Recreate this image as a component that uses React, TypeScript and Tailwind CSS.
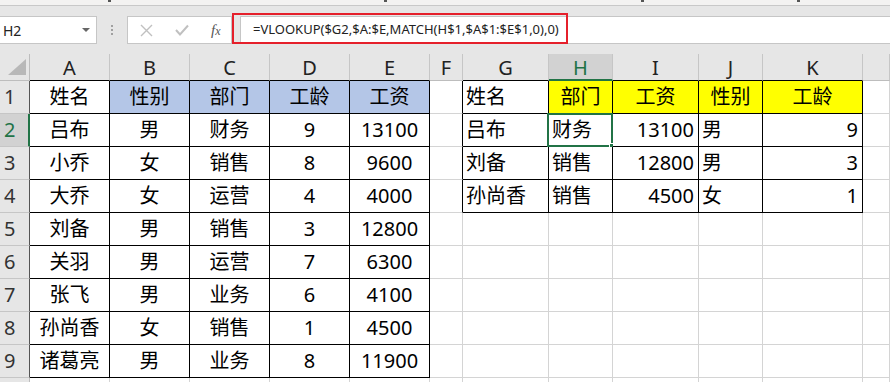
import React from 'react'

type Align = 'c' | 'l' | 'r'
type Cell = { t: string; a?: Align; bg?: string }

const LETTERS = ['A', 'B', 'C', 'D', 'E', 'F', 'G', 'H', 'I', 'J', 'K', '']

const LEFT: string[][] = [
  ['姓名', '性别', '部门', '工龄', '工资'],
  ['吕布', '男', '财务', '9', '13100'],
  ['小乔', '女', '销售', '8', '9600'],
  ['大乔', '女', '运营', '4', '4000'],
  ['刘备', '男', '销售', '3', '12800'],
  ['关羽', '男', '运营', '7', '6300'],
  ['张飞', '男', '业务', '6', '4100'],
  ['孙尚香', '女', '销售', '1', '4500'],
  ['诸葛亮', '男', '业务', '8', '11900'],
]

const RIGHT: Cell[][] = [
  [{ t: '姓名', a: 'l' }, { t: '部门', bg: 'y' }, { t: '工资', bg: 'y' }, { t: '性别', bg: 'y' }, { t: '工龄', bg: 'y' }],
  [{ t: '吕布', a: 'l' }, { t: '财务', a: 'l' }, { t: '13100', a: 'r' }, { t: '男', a: 'l' }, { t: '9', a: 'r' }],
  [{ t: '刘备', a: 'l' }, { t: '销售', a: 'l' }, { t: '12800', a: 'r' }, { t: '男', a: 'l' }, { t: '3', a: 'r' }],
  [{ t: '孙尚香', a: 'l' }, { t: '销售', a: 'l' }, { t: '4500', a: 'r' }, { t: '女', a: 'l' }, { t: '1', a: 'r' }],
]

// row r (1-based), column c (0 = A)
const cellAt = (r: number, c: number): Cell | null => {
  if (c <= 4 && r <= 9) {
    const t = LEFT[r - 1][c]
    return { t, a: 'c', bg: r === 1 && c > 0 ? 'b' : undefined }
  }
  if (c >= 6 && c <= 10 && r <= 4) {
    const cell = RIGHT[r - 1][c - 6]
    return { a: 'c', ...cell }
  }
  return null
}

const Grid = () => {
  const rows = [1, 2, 3, 4, 5, 6, 7, 8, 9, 10]
  return (
    <div className="grid grid-cols-[30px_80px_80px_80px_80px_80px_33px_86px_64px_86px_64px_100px_1fr]">
      {/* corner */}
      <div className="relative h-[27px] bg-[#e6e6e6] border-r border-b border-[#bdbdbd]">
        <svg className="absolute left-[7px] top-[5px]" width="20" height="17" viewBox="0 0 20 17">
          <polygon points="19,0 19,16 1,16" fill="#b8b8b8" />
        </svg>
      </div>
      {LETTERS.map((l, c) => {
        const inTable = c <= 4 || (c >= 6 && c <= 10)
        const sel = c === 7
        return (
          <div
            key={l + c}
            className={
              'h-[27px] flex items-center justify-center pt-[2px] text-[20px] border-r border-[#c6c6c6] ' +
              (sel
                ? 'bg-[#d2d2d2] text-[#217346] border-b-2 border-b-[#217346]'
                : 'bg-[#e6e6e6] text-[#222] border-b ' + (inTable ? 'border-b-black' : 'border-b-[#bdbdbd]'))
            }
          >
            {l}
          </div>
        )
      })}
      {rows.map((r) => (
        <React.Fragment key={r}>
          <div
            className={
              'h-[33px] flex items-center pl-[4px] text-[20px] border-b border-b-[#c6c6c6] ' +
              (r === 2
                ? 'bg-[#d2d2d2] text-[#217346] border-r-2 border-r-[#217346]'
                : 'bg-[#e6e6e6] text-[#333] border-r ' + (r <= 9 ? 'border-r-[#555]' : 'border-r-[#bdbdbd]'))
            }
          >
            {r <= 9 ? r : ''}
          </div>
          {LETTERS.map((_, c) => {
            const cell = cellAt(r, c)
            const boxed = cell !== null
            const rightBlack = boxed || (c === 5 && r <= 4)
            const align =
              cell?.a === 'l' ? 'justify-start pl-[3px]' : cell?.a === 'r' ? 'justify-end pr-[4px]' : 'justify-center'
            const bg = cell?.bg === 'b' ? 'bg-[#b4c6e7]' : cell?.bg === 'y' ? 'bg-[#ffff00]' : 'bg-white'
            return (
              <div
                key={c}
                className={
                  'relative h-[33px] flex items-center text-[20px] text-black border-r border-b ' +
                  align +
                  ' ' +
                  bg +
                  ' ' +
                  (rightBlack ? 'border-r-black' : 'border-r-[#d4d4d4]') +
                  ' ' +
                  (boxed ? 'border-b-black' : 'border-b-[#d4d4d4]')
                }
              >
                {cell?.t}
                {r === 2 && c === 7 && (
                  <>
                    <div className="absolute -left-[2px] -top-[1px] w-[66px] h-[34px] border-2 border-[#217346]" />
                    <div className="absolute -right-[3px] -bottom-[3px] w-[6px] h-[6px] bg-[#217346] border border-white" />
                  </>
                )}
              </div>
            )
          })}
        </React.Fragment>
      ))}
    </div>
  )
}

const FormulaBar = () => (
  <div className="relative h-[48px] bg-[#e6e6e6] pt-[10px]">
    <div className="flex items-start">
      {/* name box */}
      <div className="relative w-[97px] h-[28px] bg-white border border-l-0 border-[#c6c6c6] flex items-center pl-[3px] text-[14px] text-[#222]">
        H2
        <svg className="absolute left-[82px] top-[11px]" width="8" height="5" viewBox="0 0 8 5">
          <polygon points="0,0 8,0 4,4" fill="#666" />
        </svg>
      </div>
      <div className="w-[30px] h-[28px] flex flex-col items-center justify-center gap-[2px]">
        <span className="w-[2px] h-[2px] bg-[#a0a0a0]" />
        <span className="w-[2px] h-[2px] bg-[#a0a0a0]" />
        <span className="w-[2px] h-[2px] bg-[#a0a0a0]" />
      </div>
      {/* cancel / enter / insert function */}
      <div className="w-[105px] h-[28px] bg-white border border-[#c6c6c6] flex items-center">
        <svg className="ml-[12px]" width="13" height="13" viewBox="0 0 13 13">
          <path d="M1 1 L12 12 M12 1 L1 12" stroke="#c0c0c0" strokeWidth="1.4" />
        </svg>
        <svg className="ml-[22px]" width="14" height="12" viewBox="0 0 14 12">
          <path d="M1 6 L5 10.5 L13 1.5" stroke="#c0c0c0" strokeWidth="2" fill="none" />
        </svg>
        <span className="ml-[22px] text-[15px] italic font-['Liberation_Serif',serif] text-[#555] leading-none">
          f<span className="text-[12px]">x</span>
        </span>
      </div>
      <div className="ml-[8px] flex-1 h-[28px] bg-white border border-r-0 border-[#c6c6c6] flex items-center pl-[12px] text-[13px] text-[#222] whitespace-nowrap">
        =VLOOKUP($G2,$A:$E,MATCH(H$1,$A$1:$E$1,0),0)
      </div>
    </div>
    {/* highlight around the formula */}
    <div className="absolute left-[232px] top-[7px] w-[336px] h-[31px] border-2 border-[#e5202b]" />
  </div>
)

export default function App() {
  return (
    <div className="w-[890px] h-[382px] overflow-hidden bg-white font-['Noto_Sans','Noto_Sans_CJK_SC',sans-serif]">
      <div className="relative h-[6px] bg-[#f3f2f1] border-b border-[#c8c8c8]">
        <span className="absolute left-[108px] top-0 w-[3px] h-[2px] bg-[#555]" />
        <span className="absolute left-[384px] top-0 w-[3px] h-[2px] bg-[#555]" />
        <span className="absolute left-[641px] top-0 w-[3px] h-[2px] bg-[#555]" />
        <span className="absolute left-[797px] top-0 w-[3px] h-[2px] bg-[#555]" />
      </div>
      <FormulaBar />
      <Grid />
    </div>
  )
}
